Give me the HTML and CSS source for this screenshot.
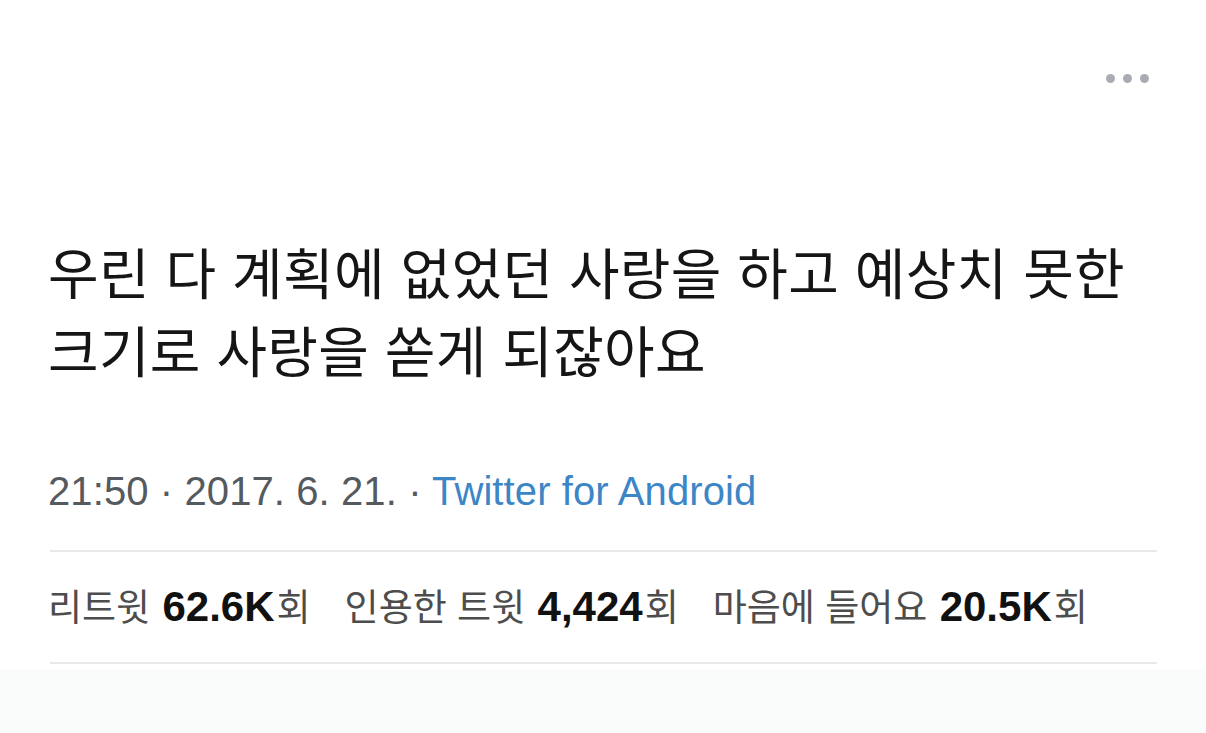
FILE: index.html
```
<!DOCTYPE html>
<html lang="ko">
<head>
  <meta charset="utf-8">
  <meta name="viewport" content="width=device-width, initial-scale=1.0">
  <title>트윗</title>
  <link rel="stylesheet" href="styles.css">
</head>
<body>
  <div class="tweet">
    <div class="top-row">
      <div class="more" aria-label="더 보기">
        <span class="dot"></span>
        <span class="dot"></span>
        <span class="dot"></span>
      </div>
    </div>

    <p class="tweet-text">우린 다 계획에 없었던 사랑을 하고 예상치 못한<br>크기로 사랑을 쏟게 되잖아요</p>

    <p class="meta">21:50 · 2017. 6. 21. · <a class="source" href="#">Twitter for Android</a></p>

    <hr class="divider">

    <div class="stats">
      <span class="stat">리트윗 <b>62.6K</b>회</span>
      <span class="stat">인용한 트윗 <b>4,424</b>회</span>
      <span class="stat">마음에 들어요 <b>20.5K</b>회</span>
    </div>

    <hr class="divider">
  </div>
  <div class="footer"></div>
</body>
</html>
```

FILE: styles.css
```
* {
  box-sizing: border-box;
}

body {
  margin: 0;
  background: #fff;
  font-family: "Liberation Sans", "Noto Sans CJK KR", sans-serif;
  color: #111;
}

.tweet {
  padding: 74px 49px 0 48px;
}

.top-row {
  display: flex;
  justify-content: flex-end;
}

.more {
  display: flex;
  gap: 8px;
  margin-right: 8px;
}

.dot {
  width: 9px;
  height: 9px;
  border-radius: 50%;
  background: #a9adb3;
}

.tweet-text {
  margin: 148px 0 0;
  font-family: "Noto Sans CJK KR", sans-serif;
  font-size: 55px;
  line-height: 78px;
  letter-spacing: 0.3px;
  color: #151515;
}

.meta {
  margin: 79px 0 0;
  font-size: 40px;
  line-height: 50px;
  letter-spacing: 0.1px;
  color: #555a5f;
}

.source {
  color: #3d86c6;
  text-decoration: none;
}

.divider {
  margin: 34px 0 0 2px;
  border: none;
  height: 2px;
  background: #e8e8e8;
}

.stats {
  display: flex;
  align-items: baseline;
  gap: 34px;
  padding: 28px 0 30px;
  font-family: "Noto Sans CJK KR", sans-serif;
  font-size: 37px;
  line-height: 50px;
  color: #4d4d4d;
}

.stats b {
  margin: 0 2px;
  font-family: "Liberation Sans", sans-serif;
  font-size: 42px;
  color: #111;
}

.stats + .divider {
  margin-top: 0;
}

.footer {
  margin-top: 5px;
  height: 70px;
  background: #fafbfb;
}
```
